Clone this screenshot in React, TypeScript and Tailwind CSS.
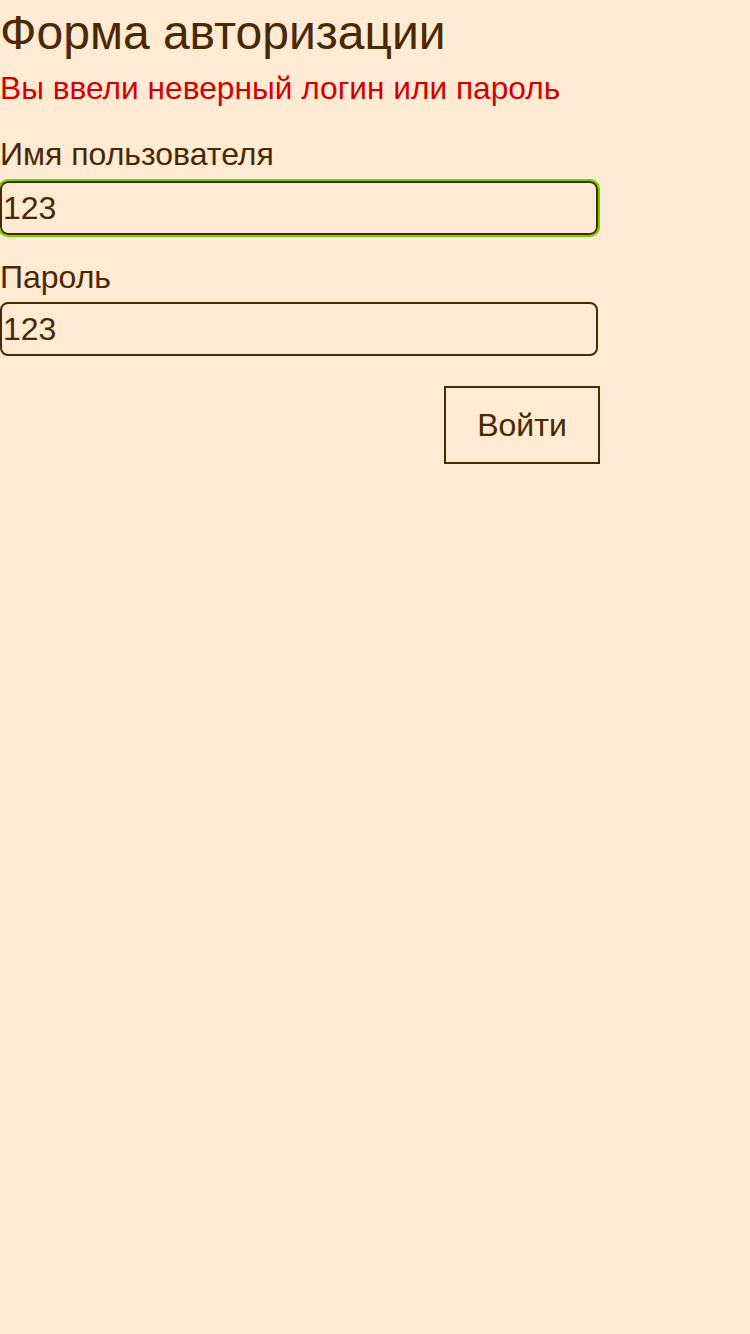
import { useState } from "react";

export default function App() {
  const [login, setLogin] = useState("123");
  const [password, setPassword] = useState("123");

  return (
    <div
      className="min-h-[1334px] w-full bg-[#ffead3] text-[#4a2800]"
      style={{ fontFamily: '"Liberation Sans", Arial, sans-serif' }}
    >
      <form className="flex w-[600px] flex-col" onSubmit={(e) => e.preventDefault()}>
        <h1 className="text-[48px] leading-[66px] font-normal">Форма авторизации</h1>
        <p className="text-[31.7px] leading-[44px] text-[#d40000]">Вы ввели неверный логин или пароль</p>

        {/* Username */}
        <label className="mt-[22px] text-[32px] leading-[44px]">Имя пользователя</label>
        <input
          value={login}
          onChange={(e) => setLogin(e.target.value)}
          className="mt-[5px] h-[54px] w-[598px] rounded-[8px] border-2 border-[#4a2800] bg-transparent px-[1px] text-[32px] outline-2 outline-offset-0 outline-[#6fd300]"
        />

        {/* Password */}
        <label className="mt-[20px] text-[32px] leading-[44px]">Пароль</label>
        <input
          value={password}
          onChange={(e) => setPassword(e.target.value)}
          className="mt-[3px] h-[54px] w-[598px] rounded-[8px] border-2 border-[#4a2800] bg-transparent px-[1px] text-[32px] outline-none"
        />

        <div className="mt-[30px] flex justify-end">
          <button
            type="submit"
            className="h-[78px] w-[156px] border-2 border-[#4a2800] bg-transparent text-[32px]"
          >
            Войти
          </button>
        </div>
      </form>
    </div>
  );
}
